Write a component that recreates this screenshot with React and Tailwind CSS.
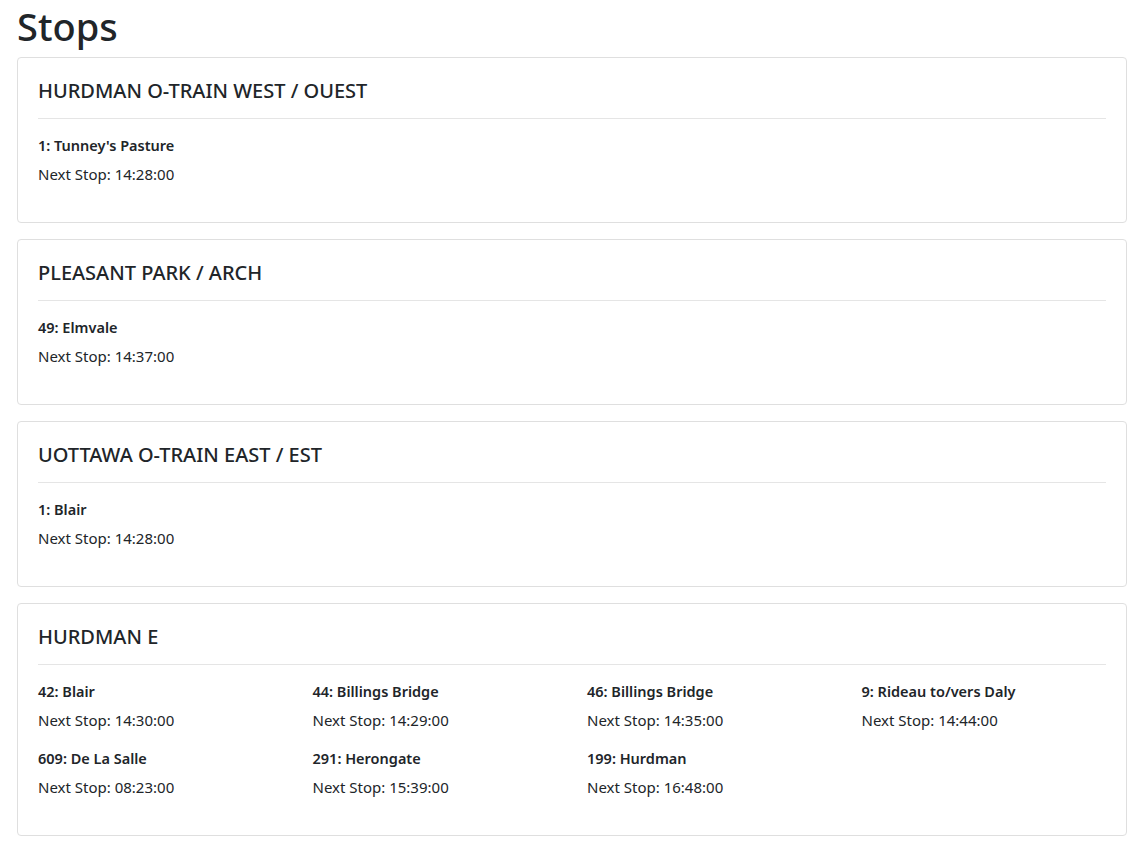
const stops = [
  {
    name: "HURDMAN O-TRAIN WEST / OUEST",
    routes: [{ label: "1: Tunney's Pasture", time: "14:28:00" }],
  },
  {
    name: "PLEASANT PARK / ARCH",
    routes: [{ label: "49: Elmvale", time: "14:37:00" }],
  },
  {
    name: "UOTTAWA O-TRAIN EAST / EST",
    routes: [{ label: "1: Blair", time: "14:28:00" }],
  },
  {
    name: "HURDMAN E",
    routes: [
      { label: "42: Blair", time: "14:30:00" },
      { label: "44: Billings Bridge", time: "14:29:00" },
      { label: "46: Billings Bridge", time: "14:35:00" },
      { label: "9: Rideau to/vers Daly", time: "14:44:00" },
      { label: "609: De La Salle", time: "08:23:00" },
      { label: "291: Herongate", time: "15:39:00" },
      { label: "199: Hurdman", time: "16:48:00" },
    ],
  },
];

function StopCard({ stop }) {
  return (
    <div className="border border-[#dfdfdf] rounded bg-white mb-4">
      <div className="p-5">
        <h5 className="text-[20px] leading-[24px] pt-px font-medium">{stop.name}</h5>
        <hr className="mt-[15px] mb-4 border-t border-[#e5e5e5]" />
        <div className="grid grid-cols-4 gap-x-[30px]">
          {stop.routes.map((r, i) => (
            <div key={i}>
              <h6 className="text-[14.5px] leading-[19px] pt-px font-semibold mb-2">{r.label}</h6>
              <p className="text-[15px] leading-6 mb-4 -mt-px">Next Stop: {r.time}</p>
            </div>
          ))}
        </div>
      </div>
    </div>
  );
}

export default function App() {
  return (
    <div
      className="min-h-screen bg-white text-[#212529] pl-[17px] pr-[13px]"
      style={{ fontFamily: '"Noto Sans", "Open Sans", sans-serif' }}
    >
      <h1 className="text-[38px] leading-[48px] pt-[2px] font-medium mb-[7px]">Stops</h1>
      {stops.map((s) => (
        <StopCard key={s.name} stop={s} />
      ))}
    </div>
  );
}
